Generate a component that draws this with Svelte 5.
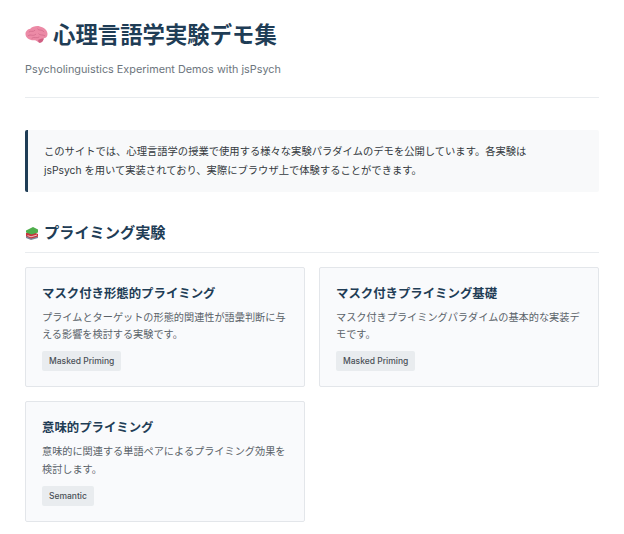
<script>
  const cards = [
    { title: 'マスク付き形態的プライミング', desc: 'プライムとターゲットの形態的関連性が語彙判断に与える影響を検討する実験です。', tag: 'Masked Priming' },
    { title: 'マスク付きプライミング基礎', desc: 'マスク付きプライミングパラダイムの基本的な実装デモです。', tag: 'Masked Priming' },
    { title: '意味的プライミング', desc: '意味的に関連する単語ペアによるプライミング効果を検討します。', tag: 'Semantic' }
  ];
</script>

<main class="page">
  <header class="site-header">
    <h1>
      <svg class="brain" viewBox="0 0 24 20" aria-hidden="true">
        <path d="M0.5 9C0.5 6 3 4 5.5 3.5C7.5 1.2 12 0 15.5 1C20 2 23.5 5 23.5 9C23.5 12 21.5 13.5 19.5 13.5C19.5 16 17.5 18.5 15 18C13 17.5 12 15.5 10 15.5C5 16 0.5 13 0.5 9Z" fill="#ec8aa6" />
        <path d="M14 15C16 14.2 18 14 19.5 13.5C19.5 16 17.5 18.5 15 18C14 17.8 13.5 16 14 15Z" fill="#cf5f82" />
        <path d="M4 7C6 5 8 7.5 10.5 5M13 3.5C15 6 17 3.5 20 7M3 11C6 8.5 8 12 11.5 9M14 8.5C16 11 18 9 21 11M7 13.5C9.5 11.5 12 14 15 12" fill="none" stroke="#d06a8a" stroke-width="0.8" />
      </svg>
      心理言語学実験デモ集
    </h1>
    <p class="subtitle">Psycholinguistics Experiment Demos with jsPsych</p>
  </header>

  <div class="intro">
    <p>このサイトでは、心理言語学の授業で使用する様々な実験パラダイムのデモを公開しています。各実験は jsPsych を用いて実装されており、実際にブラウザ上で体験することができます。</p>
  </div>

  <section>
    <h2>
      <svg class="books" viewBox="0 0 14 14" aria-hidden="true">
        <path d="M1 10L7 8L13 10.5V12L6 14L1 12Z" fill="#7c8798" />
        <path d="M1 7L7 5.5L13 8V10.5L6 12.5L1 10Z" fill="#c8323c" />
        <path d="M2.5 9.6L6 10.8L12 9" fill="none" stroke="#f3e9e4" stroke-width="0.8" />
        <path d="M1 4.5L8 1L13 3.5V6.5L6.5 8.5L1 6.5Z" fill="#4fae4c" />
      </svg>
      プライミング実験
    </h2>
    <div class="grid">
      {#each cards as card}
        <article class="card">
          <h3>{card.title}</h3>
          <p>{card.desc}</p>
          <span class="tag">{card.tag}</span>
        </article>
      {/each}
    </div>
  </section>
</main>

<style>
  :global(body) {
    background: #fff;
  }

  .page {
    padding: 20px 25px 0;
    font-family: Inter, "Noto Sans CJK JP", sans-serif;
  }

  .site-header {
    border-bottom: 1px solid #e9ecef;
    padding-bottom: 20px;
    margin-bottom: 32px;
  }

  h1 {
    margin: 0 0 13px;
    font-size: 22.4px;
    line-height: 29px;
    font-weight: 700;
    color: #1f3d56;
    display: flex;
    align-items: center;
    gap: 5px;
  }

  .brain {
    width: 23px;
    height: 20px;
  }

  .subtitle {
    margin: 0;
    font-size: 10.85px;
    line-height: 15px;
    color: #6c757d;
  }

  .intro {
    background: #f8f9fa;
    border-left: 3px solid #1f3d56;
    border-radius: 2px;
    padding: 12px 40px 11.5px 16px;
    margin-bottom: 30.5px;
  }

  .intro p {
    margin: 0;
    font-size: 10.3px;
    line-height: 19px;
    color: #343a40;
  }

  h2 {
    margin: 0 0 13.5px;
    padding-bottom: 9px;
    border-bottom: 1px solid #e9ecef;
    font-size: 15.2px;
    line-height: 21px;
    font-weight: 700;
    color: #1f3d56;
    display: flex;
    align-items: center;
    gap: 5px;
  }

  .books {
    width: 14px;
    height: 14px;
  }

  .grid {
    display: grid;
    grid-template-columns: repeat(2, 1fr);
    gap: 14.3px 14px;
  }

  .card {
    background: #f9fafc;
    border: 1px solid #e3e6ea;
    border-radius: 2px;
    padding: 17px 16px 15.2px;
  }

  h3 {
    margin: 0 0 6px;
    font-size: 12.4px;
    line-height: 18px;
    font-weight: 700;
    color: #1f3d56;
  }

  .card p {
    margin: 0 0 7.5px;
    font-size: 10.17px;
    line-height: 17.5px;
    color: #5a6269;
  }

  .tag {
    display: block;
    width: fit-content;
    background: #e9ecef;
    border-radius: 2px;
    padding: 3px 7px;
    font-size: 8.5px;
    line-height: 14px;
    font-weight: 500;
    color: #495057;
  }
</style>
